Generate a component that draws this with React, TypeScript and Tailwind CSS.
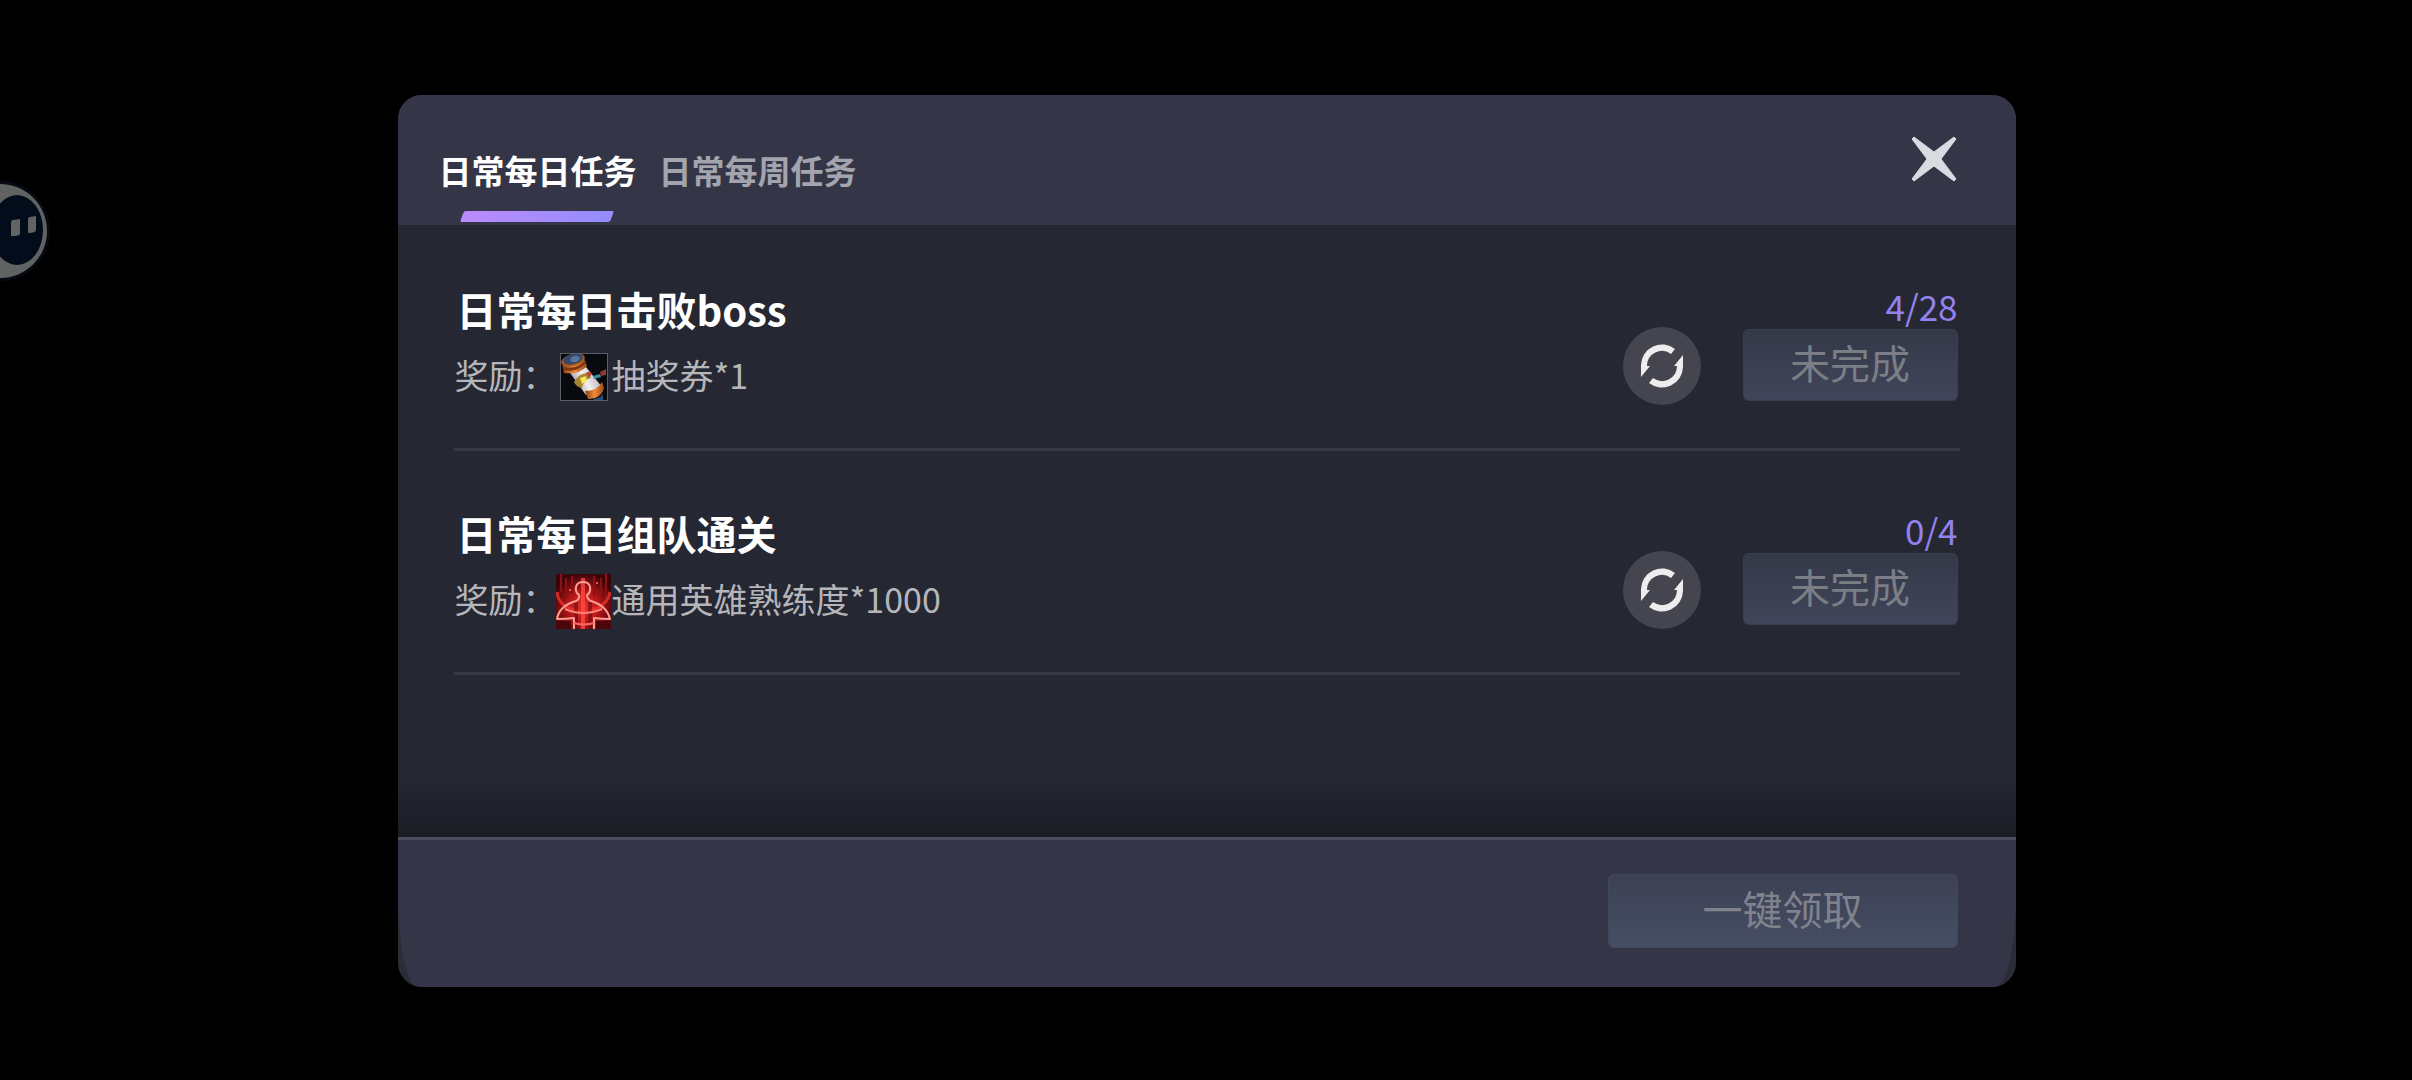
import { useState } from "react";

type Task = {
  title: string;
  reward: string;
  progress: string;
  icon: "ticket" | "hero";
};

const tasks: Task[] = [
  { title: "日常每日击败boss", reward: "抽奖券*1", progress: "4/28", icon: "ticket" },
  { title: "日常每日组队通关", reward: "通用英雄熟练度*1000", progress: "0/4", icon: "hero" },
];

const tabs = ["日常每日任务", "日常每周任务"];

function TicketIcon() {
  return (
    <svg viewBox="0 0 48 48" className="size-12" aria-hidden="true">
      <defs>
        <linearGradient id="scroll" x1="0" y1="0.7" x2="1" y2="0.3">
          <stop offset="0" stopColor="#8d8288" />
          <stop offset="0.5" stopColor="#f4f2f3" />
          <stop offset="1" stopColor="#a9a3ac" />
        </linearGradient>
        <linearGradient id="cap" x1="0" y1="0" x2="1" y2="0">
          <stop offset="0" stopColor="#8a3c14" />
          <stop offset="0.5" stopColor="#ef8d38" />
          <stop offset="1" stopColor="#9c4a1c" />
        </linearGradient>
      </defs>
      <rect width="48" height="48" fill="#090a0e" />
      <path d="M10 20 26 14 42 34 26 42Z" fill="url(#scroll)" />
      <path d="M2 9Q13 15 23 3L27 13Q19 22 4 20Z" fill="url(#cap)" />
      <path d="M4 14Q16 17 25 8L26 10Q17 20 4 17Z" fill="#7c3513" />
      <ellipse cx="13" cy="7" rx="12" ry="6" transform="rotate(-14 13 7)" fill="#a9571f" />
      <ellipse cx="13" cy="6" rx="10" ry="5" transform="rotate(-14 13 6)" fill="#33466b" />
      <ellipse cx="15" cy="6" rx="5" ry="3" transform="rotate(-14 15 6)" fill="#56749c" />
      <path d="M25 38Q37 38 42 29L44 35Q41 46 28 46Z" fill="url(#cap)" />
      <path d="M33 46Q41 45 43 41V47H34Z" fill="#2a4c7c" />
      <path d="M14 29Q19 20 28 20L31 25Q24 26 22 35Q16 34 14 29Z" fill="#a88432" />
      <path d="M20 25 26 23 27 28 22 31Z" fill="#f3e85a" />
      <path d="M26 20Q30 17 32 21L29 25Z" fill="#b8483a" />
      <path d="M33 23 40 21 41 24 34 26Z" fill="#3c8f9d" />
      <path d="M40 19 46 16V22L41 23Z" fill="#8c3a35" />
      <rect x="0.5" y="0.5" width="47" height="47" fill="none" stroke="#5b5d68" />
    </svg>
  );
}

function HeroIcon() {
  return (
    <svg viewBox="0 0 55 55" className="size-[55px]" aria-hidden="true">
      <defs>
        <radialGradient id="glow" cx="0.5" cy="0.6" r="0.6">
          <stop offset="0" stopColor="#e8342c" />
          <stop offset="0.5" stopColor="#b01518" />
          <stop offset="1" stopColor="#3c0509" />
        </radialGradient>
      </defs>
      <rect width="55" height="55" fill="url(#glow)" />
      <path d="M5 0V18M10 4V24M16 2V20M38 2V22M45 4V20M50 0V26" stroke="#8f1014" strokeWidth="2" />
      <path d="M0 47H15V55H0ZM40 47H55V55H40Z" fill="#4c060b" />
      <path d="M1 18Q2 34 27 38Q52 34 54 18" fill="none" stroke="#f0322c" strokeWidth="3" opacity="0.8" />
      <path d="M20 28V55M34 28V55" stroke="#6d080c" strokeWidth="4" opacity="0.6" />
      <path d="M27 4V55" stroke="#ff4a40" strokeWidth="4" opacity="0.8" />
      <path
        d="M18 55V44Q10 45 1 45Q3 32 20 27Q24 25 23 21Q19 18 20 13Q21 8 27 8Q33 8 34 13Q35 18 31 21Q31 25 35 27Q51 32 54 45Q46 45 38 44V55"
        fill="none"
        stroke="#ff9d92"
        strokeWidth="2"
        strokeLinejoin="round"
      />
      <path d="M9 35Q27 43 46 35" fill="none" stroke="#ff8276" strokeWidth="2" />
      <path d="M18 49Q27 52 38 49" fill="none" stroke="#f86a60" strokeWidth="2" />
      <circle cx="41" cy="9" r="1" fill="#ff7a6c" />
      <circle cx="14" cy="16" r="1" fill="#ff7a6c" />
    </svg>
  );
}

function RefreshIcon() {
  return (
    <svg viewBox="0 0 44 44" className="size-11" aria-hidden="true">
      <path d="M1 33V21A21 21 0 0 1 35 5L31 10A15 15 0 0 0 7 22H10Z" fill="#ededee" />
      <path d="M43 11V23A21 21 0 0 1 9 39L13 34A15 15 0 0 0 37 22H34Z" fill="#ededee" />
    </svg>
  );
}

function CloseIcon() {
  return (
    <svg viewBox="0 0 46 46" className="size-[46px]" aria-hidden="true">
      <path
        d="M3 1 23 16 43 1 45 3 30 23 45 43 43 45 23 30 3 45 1 43 16 23 1 3Z"
        fill="#d9dbe0"
        stroke="#d9dbe0"
        strokeWidth="1"
        strokeLinejoin="round"
      />
    </svg>
  );
}

function FloatingHelper() {
  return (
    <button type="button" aria-label="悬浮助手" className="absolute top-[180px] left-0">
      <svg viewBox="0 0 52 102" className="h-[102px] w-[52px]" aria-hidden="true">
        <circle cx="0" cy="51" r="50" fill="#060a12" />
        <circle cx="0" cy="51" r="47" fill="#616262" />
        <ellipse cx="17" cy="50" rx="26" ry="35" fill="#030c1b" />
        <path d="M13 40 20 39V54Q20 56 11 56V43Q11 40 13 40Z" fill="#626363" />
        <path d="M30 37 36 36V50Q36 53 28 53V40Q28 37 30 37Z" fill="#626363" />
      </svg>
    </button>
  );
}

function TaskRow({ task }: { task: Task }) {
  return (
    <li className="flex h-56 items-start justify-between border-b-3 border-[#383945] pt-[52px]">
      <div>
        <h2 className="pl-0.5 text-[40px] leading-[60px] font-bold text-white">{task.title}</h2>
        <p className="mt-1.5 flex h-[60px] items-center text-[34px] leading-[60px] text-[#b6b6ba]">
          奖励：
          <span className="mt-1 flex w-[55px] shrink-0 items-center justify-center">
            {task.icon === "ticket" ? <TicketIcon /> : <HeroIcon />}
          </span>
          {task.reward}
        </p>
      </div>
      <div className="flex items-end gap-[42px] pr-0.5">
        <button
          type="button"
          aria-label="刷新任务"
          className="-mb-1 flex size-[78px] items-center justify-center rounded-full bg-[#454550]"
        >
          <RefreshIcon />
        </button>
        <div className="flex flex-col items-end">
          <span className="h-[50px] text-[35px] leading-[54px] text-[#9382ee]">{task.progress}</span>
          <button
            type="button"
            className="h-[72px] w-[215px] rounded-md border border-[#3b4050] bg-linear-to-b from-[#343948] to-[#40455a] pb-1.5 text-[40px] leading-none text-[#7c7e86]"
          >
            未完成
          </button>
        </div>
      </div>
    </li>
  );
}

export default function App() {
  const [active, setActive] = useState(0);

  return (
    <div className="relative flex min-h-screen items-center justify-center bg-black pt-0.5 pl-0.5 font-['Noto_Sans_CJK_SC',sans-serif]">
      <FloatingHelper />
      <main className="w-[67.1%] overflow-hidden rounded-3xl bg-[#2b2c38]">
        <header className="flex h-[130px] items-start justify-between bg-[#343648] pr-[59px] pl-10">
          <nav className="flex gap-[22px] pt-[51px]">
            {tabs.map((label, index) => (
              <button
                key={label}
                type="button"
                onClick={() => setActive(index)}
                className={
                  index === active
                    ? "flex flex-col items-center text-[33px] leading-[48px] font-bold text-white"
                    : "flex flex-col items-center text-[33px] leading-[48px] font-bold text-[#a3a4ae]"
                }
              >
                {label}
                {index === active && (
                  <span className="mt-[17px] h-[11px] w-[150px] -skew-x-20 rounded-xs bg-linear-to-r from-[#bb8afb] to-[#938dfd]" />
                )}
              </button>
            ))}
          </nav>
          <button type="button" aria-label="关闭" className="mt-[41px]">
            <CloseIcon />
          </button>
        </header>
        <section className="min-h-[612px] bg-linear-to-t from-[#1c1c25] to-[#252732] to-[60px] px-14 pt-0.5">
          <ul>
            {tasks.map((task) => (
              <TaskRow key={task.title} task={task} />
            ))}
          </ul>
        </section>
        <footer className="flex justify-end rounded-br-[20px_94px] rounded-bl-[20px_94px] border-t-3 border-[#4b4c5c] bg-[#343648] pt-[34px] pr-[58px] pb-[39px]">
          <button
            type="button"
            className="h-[74px] w-[350px] rounded-md border border-[#42485a] bg-linear-to-b from-[#3c4154] to-[#474e63] pb-1.5 text-[40px] leading-none text-[#80838d]"
          >
            一键领取
          </button>
        </footer>
      </main>
    </div>
  );
}
